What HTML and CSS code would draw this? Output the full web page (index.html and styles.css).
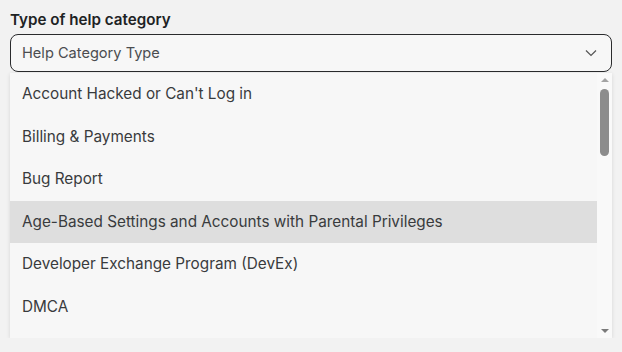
FILE: index.html
```html
<!DOCTYPE html>
<html lang="en">
<head>
    <meta charset="UTF-8">
    <title>Help Category</title>
    <link rel="stylesheet" href="styles.css">
</head>
<body>
    <div class="field">
        <div class="field-label">Type of help category</div>
        <div class="select">
            <span class="placeholder">Help Category Type</span>
            <svg class="chevron" width="12" height="8" viewBox="0 0 12 8">
                <path d="M1 1.5 L6 6.5 L11 1.5" fill="none" stroke="#555" stroke-width="1.2"/>
            </svg>
        </div>
        <div class="menu">
            <div class="options">
                <div class="option">Account Hacked or Can't Log in</div>
                <div class="option">Billing &amp; Payments</div>
                <div class="option">Bug Report</div>
                <div class="option hover">Age-Based Settings and Accounts with Parental Privileges</div>
                <div class="option">Developer Exchange Program (DevEx)</div>
                <div class="option">DMCA</div>
            </div>
            <div class="scrollbar">
                <div class="arrow up"></div>
                <div class="track">
                    <div class="thumb"></div>
                </div>
                <div class="arrow down"></div>
            </div>
        </div>
    </div>
</body>
</html>
```
FILE: styles.css
```css
body {
    margin: 0;
    padding: 0;
    background-color: #f2f2f2;
    font-family: 'Inter', 'Liberation Sans', sans-serif;
    color: #393b3d;
}

.field {
    padding: 9px 10px 0 10px;
}

.field-label {
    font-size: 15.2px;
    font-weight: 600;
    color: #202224;
    line-height: 22px;
    margin-bottom: 3px;
}

.select {
    height: 36px;
    border: 1.5px solid #2a2b2d;
    border-radius: 8px;
    display: flex;
    align-items: center;
    justify-content: space-between;
    padding: 0 14px 0 11px;
    background-color: #f7f7f7;
}

.placeholder {
    font-size: 14.6px;
    color: #4b4d50;
}

.menu {
    margin-top: 1px;
    height: 265px;
    background-color: #f7f7f7;
    box-shadow: 0 1px 4px rgba(0, 0, 0, 0.12);
    display: flex;
    overflow: hidden;
}

.options {
    flex: 1;
}

.option {
    height: 42.6px;
    line-height: 42.6px;
    padding-left: 12px;
    font-size: 15.3px;
    color: #393b3d;
    white-space: nowrap;
}

.option.hover {
    background-color: #dedede;
}

.scrollbar {
    width: 15px;
    background-color: #f9f9f9;
    display: flex;
    flex-direction: column;
    align-items: center;
}

.arrow {
    width: 0;
    height: 0;
    border-left: 4px solid transparent;
    border-right: 4px solid transparent;
    margin: 5px 0;
}

.arrow.up {
    border-bottom: 4px solid #a3a3a3;
}

.arrow.down {
    border-top: 4px solid #7a7a7a;
}

.track {
    flex: 1;
    width: 100%;
    display: flex;
    justify-content: center;
}

.thumb {
    width: 9px;
    height: 67px;
    margin-top: 2px;
    border-radius: 5px;
    background-color: #8c8c8c;
}
```
